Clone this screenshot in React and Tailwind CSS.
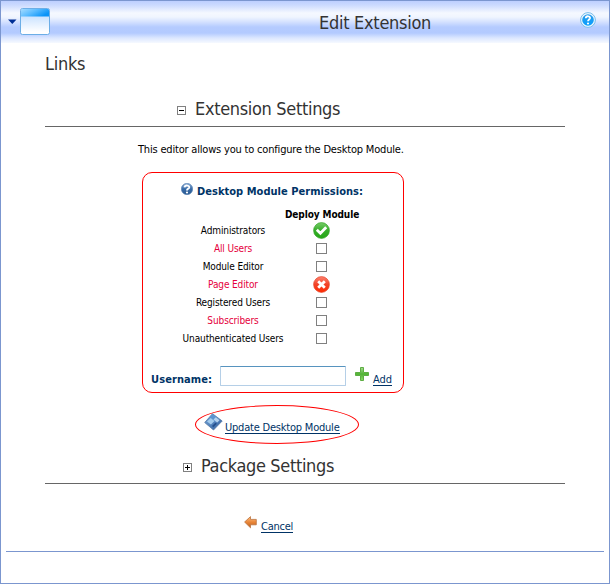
import React from "react";

const permissions = [
  { role: "Administrators", state: "allow" },
  { role: "All Users", state: "none", inherited: true },
  { role: "Module Editor", state: "none" },
  { role: "Page Editor", state: "deny", inherited: true },
  { role: "Registered Users", state: "none" },
  { role: "Subscribers", state: "none", inherited: true },
  { role: "Unauthenticated Users", state: "none" },
];

function WindowIcon() {
  return (
    <svg width="30" height="28" viewBox="0 0 30 28">
      <defs>
        <linearGradient id="winTop" x1="0" y1="0" x2="1" y2=".5">
          <stop offset="0" stopColor="#a5dcff" />
          <stop offset=".5" stopColor="#5bbcff" />
          <stop offset="1" stopColor="#0a94f8" />
        </linearGradient>
        <linearGradient id="winBody" x1="0" y1="0" x2="0" y2="1">
          <stop offset="0" stopColor="#c2e0ff" />
          <stop offset=".35" stopColor="#cfe5ff" />
          <stop offset=".9" stopColor="#fff" />
        </linearGradient>
      </defs>
      <rect x=".5" y=".5" width="29" height="26" rx="2" fill="url(#winBody)" stroke="#6caee6" />
      <path d="M2 1H28L29 2V8.5H1V2Z" fill="url(#winTop)" />
    </svg>
  );
}

function HelpBadge() {
  return (
    <svg width="16" height="16" viewBox="0 0 16 16">
      <defs>
        <linearGradient id="helpBlue" x1="0" y1="0" x2="0" y2="1">
          <stop offset="0" stopColor="#2a9bea" />
          <stop offset="1" stopColor="#08a0ff" />
        </linearGradient>
      </defs>
      <circle cx="8" cy="8" r="7.4" fill="#eff8ff" stroke="#78bdeb" />
      <circle cx="8" cy="8" r="5.8" fill="url(#helpBlue)" />
      <path d="M5.8 6.3C6 3.4 10.5 3.8 10 6.3C9.7 7.5 8 7.6 8 9.2" fill="none" stroke="#fff" strokeWidth="1.8" />
      <circle cx="8" cy="11.5" r="1.1" fill="#fff" />
    </svg>
  );
}

function HelpSphere() {
  return (
    <svg width="12" height="12" viewBox="0 0 12 12">
      <defs>
        <linearGradient id="sphere" x1="0" y1="0" x2="0" y2="1">
          <stop offset="0" stopColor="#8faed4" />
          <stop offset=".5" stopColor="#386ba8" />
          <stop offset="1" stopColor="#28588f" />
        </linearGradient>
      </defs>
      <circle cx="6" cy="6" r="5.7" fill="url(#sphere)" stroke="#5480b4" strokeWidth=".6" />
      <path d="M3.5 4.4C3.9 1.8 8.7 2.1 8.2 4.5C7.8 6 6 5.8 6 7.5" fill="none" stroke="#fff" strokeWidth="1.9" />
      <circle cx="6" cy="9.5" r="1.1" fill="#fff" />
    </svg>
  );
}

function StatusBall({ allow }) {
  return (
    <svg width="17" height="17" viewBox="0 0 17 17">
      <defs>
        <linearGradient id="green" x1="0" y1="0" x2="0" y2="1">
          <stop offset="0" stopColor="#78cc69" />
          <stop offset=".5" stopColor="#35ae29" />
          <stop offset="1" stopColor="#25a616" />
        </linearGradient>
        <linearGradient id="red" x1="0" y1="0" x2="0" y2="1">
          <stop offset="0" stopColor="#ff8270" />
          <stop offset=".5" stopColor="#f24328" />
          <stop offset="1" stopColor="#ff2a00" />
        </linearGradient>
      </defs>
      <circle cx="8.5" cy="8.5" r="7.9" fill={allow ? "url(#green)" : "url(#red)"} stroke={allow ? "#35a62b" : "#e4492f"} strokeWidth=".7" />
      {allow ? (
        <path d="M3.8 7.8L7.4 11.2L13.2 5.2" fill="none" stroke="#fff" strokeWidth="2.8" />
      ) : (
        <path d="M5.2 5.2L11.8 11.8M11.8 5.2L5.2 11.8" stroke="#fff" strokeWidth="2.8" />
      )}
    </svg>
  );
}

function PlusIcon() {
  return (
    <svg width="14" height="14" viewBox="0 0 14 14">
      <defs>
        <linearGradient id="plus" x1="0" y1="0" x2="0" y2="1">
          <stop offset="0" stopColor="#a7dc90" />
          <stop offset=".5" stopColor="#50b334" />
          <stop offset="1" stopColor="#8ad868" />
        </linearGradient>
      </defs>
      <path d="M5.5 .5H8.5V5.5H13.5V8.5H8.5V13.5H5.5V8.5H.5V5.5H5.5Z" fill="url(#plus)" stroke="#5dad43" />
    </svg>
  );
}

function SaveIcon() {
  return (
    <svg width="19" height="18" viewBox="0 0 19 18">
      <defs>
        <linearGradient id="disk" x1="0" y1="0" x2="1" y2="1">
          <stop offset="0" stopColor="#78a8dc" />
          <stop offset="1" stopColor="#315f9d" />
        </linearGradient>
      </defs>
      <path d="M8.5 .7L18.2 8L9.5 17L.7 9.5Z" fill="url(#disk)" stroke="#5579a5" strokeWidth=".8" />
      <path d="M5.5 4L9 1.5L14.8 6L11.5 9Z" fill="#5d94d0" />
      <path d="M3 8.5L6.7 5L10.5 8L6.9 11.6Z" fill="#a4cced" />
      <path d="M9.5 6.5L11.8 4.3L15.5 7.3L13.2 9.5Z" fill="#b5d2ee" />
      <path d="M8 13L11.4 9.7L12.8 10.8L9.4 14.2Z" fill="#244f8c" />
    </svg>
  );
}

function BackArrow() {
  return (
    <svg width="13" height="13" viewBox="0 0 13 13">
      <defs>
        <linearGradient id="arrow" x1="0" y1="0" x2="0" y2="1">
          <stop offset="0" stopColor="#ffc083" />
          <stop offset=".5" stopColor="#e98638" />
          <stop offset="1" stopColor="#b95f1e" />
        </linearGradient>
      </defs>
      <path d="M.6 6L6.5 .6V3.4H12.3V8.8H6.5V11.8Z" fill="url(#arrow)" stroke="#bb723d" strokeWidth=".8" />
    </svg>
  );
}

function Toggle({ open }) {
  return (
    <svg width="9" height="9" viewBox="0 0 9 9" shapeRendering="crispEdges">
      <rect x=".5" y=".5" width="8" height="8" fill="#fff" stroke="#808080" />
      <path d={open ? "M2 4.5H7" : "M2 4.5H7M4.5 2V7"} stroke="#000" />
    </svg>
  );
}

export default function App() {
  return (
    <main className="flex h-[584px] w-[610px] flex-col border border-[#7b96cf] bg-white font-['DejaVu_Sans_Condensed','DejaVu_Sans',sans-serif] text-[11px] leading-[14px] text-black [font-stretch:condensed]">
      <header className="flex h-[42px] shrink-0 items-start bg-[linear-gradient(to_bottom,#bdcfff_0px,#cbdafe_4px,#f5f8ff_12px,#f0f5ff_16px,#d4e1ff_21px,#b5cbff_26px,#b3caff_32px,#dce7ff_37px,#f6f9ff_42px)]">
        <svg className="ml-[7px] mt-[18px]" width="9" height="6" viewBox="0 0 9 6">
          <path d="M0 .5H8.5L4.3 5Z" fill="#002f96" />
        </svg>
        <div className="ml-[3px] mt-[7px]"><WindowIcon /></div>
        <h1 className="ml-[269px] mt-[10px] w-[130px] whitespace-nowrap text-[18px] leading-[24px] tracking-[-0.28px] text-[#333]">Edit Extension</h1>
        <div className="ml-auto mr-[13px] mt-[11px]"><HelpBadge /></div>
      </header>

      <h2 className="ml-[44px] mt-[9px] h-[24px] shrink-0 text-[18px] leading-[24px] tracking-[-0.3px] text-[#333]">Links</h2>

      <section className="mx-[44px] mt-[21px] flex h-[30px] shrink-0 items-start border-b border-[#666] pl-[132px]">
        <div className="mt-[9px]"><Toggle open /></div>
        <h2 className="ml-[9px] whitespace-nowrap text-[18px] leading-[24px] tracking-[-0.33px] text-[#333]">Extension Settings</h2>
      </section>

      <p className="ml-[137px] mt-[16px] h-[14px] shrink-0 whitespace-nowrap tracking-[-0.19px]">This editor allows you to configure the Desktop Module.</p>

      <section className="ml-[141px] mt-[15px] flex h-[221px] w-[262px] shrink-0 flex-col rounded-[10px] border border-[#f00]">
        <div className="ml-[38px] mt-[10px] flex h-[17px] items-start text-[#003366]">
          <HelpSphere />
          <strong className="ml-[4px] mt-[2px] whitespace-nowrap tracking-[0.03px]">Desktop Module Permissions:</strong>
        </div>
        <strong className="ml-[129px] mt-[8px] h-[13px] w-[100px] whitespace-nowrap pl-[13px] text-[10px] tracking-[-0.1px]">Deploy Module</strong>
        <div className="flex flex-col">
          {permissions.map(({ role, state, inherited }) => (
            <div key={role} className="flex h-[18px] items-center">
              <span className={"ml-[30px] w-[120px] whitespace-nowrap pt-[2px] text-center text-[10px] tracking-[-0.12px] " + (inherited ? "text-[#e5003c]" : "")}>{role}</span>
              <span className="ml-[20px] flex w-[17px] justify-center">
                {state === "none" ? <span className="size-[11px] border border-[#808080] bg-white" /> : <StatusBall allow={state === "allow"} />}
              </span>
            </div>
          ))}
        </div>
        <div className="mt-[18px] flex h-[24px] items-start pl-[8px]">
          <strong className="mt-[8px] w-[69px] whitespace-nowrap tracking-[0.1px] text-[#003366]">Username:</strong>
          <input aria-label="Username" className="mt-px h-[20px] w-[126px] rounded-[1px] border border-[#b5cfe7] border-t-[#5794bf] outline-none" />
          <div className="ml-[9px] mt-[2px]"><PlusIcon /></div>
          <a className="ml-[4px] mt-[7px] h-[14px] whitespace-nowrap border-b border-[#003366] leading-[15px] text-[#003366]">Add</a>
        </div>
      </section>

      <div className="ml-[194px] mt-[12px] flex h-[39px] w-[164px] shrink-0 items-start rounded-[50%] border border-[#f00] pl-[8px]">
        <div className="mt-[7px]"><SaveIcon /></div>
        <a className="ml-[2px] mt-[14px] h-[14px] whitespace-nowrap border-b border-[#003366] leading-[15px] tracking-[-0.21px] text-[#003366]">Update Desktop Module</a>
      </div>

      <section className="mx-[44px] mt-[10px] flex h-[30px] shrink-0 items-start border-b border-[#666] pl-[138px]">
        <div className="mt-[9px]"><Toggle /></div>
        <h2 className="ml-[9px] whitespace-nowrap text-[18px] leading-[24px] tracking-[-0.35px] text-[#333]">Package Settings</h2>
      </section>

      <div className="ml-[243px] mt-[31px] flex h-[20px] shrink-0 items-start">
        <div className="mt-px"><BackArrow /></div>
        <a className="ml-[4px] mt-[5px] h-[13px] whitespace-nowrap border-b border-[#003366] leading-[13px] tracking-[-0.25px] text-[#003366]">Cancel</a>
      </div>
      <div className="mx-[5px] mt-[16px] h-px shrink-0 bg-[#7b96cf]" />
    </main>
  );
}
